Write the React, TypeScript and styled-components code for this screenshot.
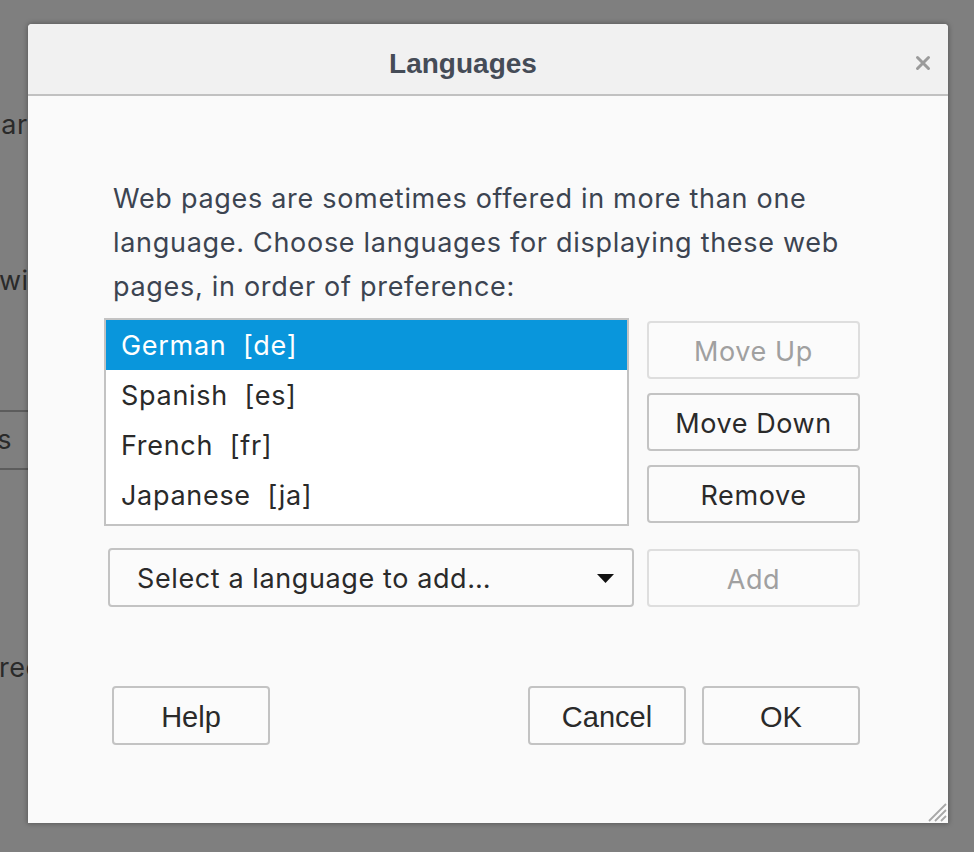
import React from "react";
import styled, { createGlobalStyle } from "styled-components";

const Global = createGlobalStyle`
  html, body { margin: 0; padding: 0; }
  body { width: 974px; height: 852px; overflow: hidden; background: #7f7f7f; }
`;

const Screen = styled.div`
  position: relative;
  width: 974px;
  height: 852px;
  background: #7f7f7f;
  overflow: hidden;
  font-family: Inter, "Noto Sans", sans-serif;
`;

const BackPage = styled.div`
  display: flex;
  flex-direction: column;
  padding-top: 110px;
  color: #2a2a2a;
  font-size: 27px;
  letter-spacing: 0.5px;
`;

const BgLine = styled.div<{ $shift?: number; $end?: number; $top: number }>`
  margin-left: ${(p) => p.$shift ?? 0}px;
  width: ${(p) => (p.$end ? `${p.$end}px` : "auto")};
  margin-top: ${(p) => p.$top}px;
  height: 30px;
  line-height: 30px;
  display: flex;
  justify-content: ${(p) => (p.$end ? "flex-end" : "flex-start")};
  white-space: nowrap;
`;

const BgRule = styled.div<{ $top: number }>`
  margin-top: ${(p) => p.$top}px;
  height: 2px;
  background: #5c5c5c;
  width: 200px;
`;

const Dialog = styled.div`
  position: absolute;
  left: 28px;
  top: 24px;
  width: 920px;
  height: 799px;
  display: flex;
  flex-direction: column;
  background: #fafafa;
  border-radius: 4px 4px 0 0;
  box-shadow: 0 0 5px 1px rgba(0, 0, 0, 0.28);
  overflow: hidden;
`;

const Header = styled.div`
  position: relative;
  height: 70px;
  flex: 0 0 70px;
  display: flex;
  align-items: center;
  justify-content: center;
  padding-right: 50px;
  background: #f1f1f1;
  border-bottom: 2px solid #c1c1c1;
`;

const Title = styled.div`
  font-family: "Liberation Sans", Arial, sans-serif;
  font-weight: bold;
  font-size: 28px;
  color: #454c57;
  margin-top: 9px;
`;

const Close = styled.button`
  position: absolute;
  right: 16px;
  top: 30px;
  width: 18px;
  height: 18px;
  padding: 0;
  border: none;
  background: transparent;
  display: flex;
  align-items: center;
  justify-content: center;
`;

const Body = styled.div`
  flex: 1;
  display: flex;
  flex-direction: column;
  padding: 81px 88px 0 76px;
`;

const Intro = styled.p`
  margin: 0 0 9px 9px;
  font-size: 27px;
  letter-spacing: 0.7px;
  line-height: 44px;
  color: #3c4451;
`;

const ListRow = styled.div`
  display: flex;
  gap: 18px;
  align-items: flex-start;
`;

const List = styled.div`
  width: 525px;
  height: 208px;
  box-sizing: border-box;
  border: 2px solid #c3c3c3;
  background: #ffffff;
  display: flex;
  flex-direction: column;
`;

const Item = styled.div<{ $selected?: boolean }>`
  height: 50px;
  flex: 0 0 50px;
  display: flex;
  align-items: center;
  padding-left: 15px;
  font-size: 27px;
  letter-spacing: 0.7px;
  color: ${(p) => (p.$selected ? "#ffffff" : "#2a2a2a")};
  background: ${(p) => (p.$selected ? "#0996dc" : "transparent")};
  white-space: pre;
`;

const SideButtons = styled.div`
  display: flex;
  flex-direction: column;
  gap: 14px;
  padding-top: 3px;
`;

const Button = styled.button<{ $disabled?: boolean; $w?: number; $classic?: boolean }>`
  width: ${(p) => p.$w ?? 213}px;
  height: ${(p) => (p.$classic ? 59 : 58)}px;
  box-sizing: border-box;
  border: 2px solid ${(p) => (p.$disabled ? "#dedede" : "#c3c3c3")};
  border-radius: 4px;
  background: #fbfbfb;
  color: ${(p) => (p.$disabled ? "#a0a0a0" : "#2a2a2a")};
  font-family: ${(p) =>
    p.$classic ? `"Liberation Sans", Arial, sans-serif` : `Inter, "Noto Sans", sans-serif`};
  font-size: ${(p) => (p.$classic ? 29 : 27)}px;
  letter-spacing: ${(p) => (p.$classic ? 0 : 0.6)}px;
  padding: 3px 0 0;
  display: flex;
  align-items: center;
  justify-content: center;
`;

const AddRow = styled.div`
  display: flex;
  align-items: center;
  gap: 13px;
  margin-top: 22px;
  padding-left: 4px;
`;

const Select = styled.div`
  width: 526px;
  height: 59px;
  box-sizing: border-box;
  border: 2px solid #c3c3c3;
  border-radius: 4px;
  background: #fbfbfb;
  display: flex;
  align-items: center;
  justify-content: space-between;
  padding: 2px 18px 0 27px;
  font-size: 27px;
  letter-spacing: 0.6px;
  color: #2a2a2a;
`;

const Footer = styled.div`
  display: flex;
  align-items: center;
  margin-top: 79px;
  padding-left: 8px;
  gap: 16px;
`;

const Spacer = styled.div`
  flex: 1;
`;

const Grip = styled.div`
  position: absolute;
  right: 1px;
  bottom: 1px;
  width: 20px;
  height: 20px;
`;

export default function App() {
  return (
    <>
      <Global />
      <Screen>
        <BackPage>
          <BgLine $shift={-33} $top={0}>Sharing data</BgLine>
          <BgLine $shift={-1} $top={126}>windows and tabs</BgLine>
          <BgRule $top={114} />
          <BgLine $end={12} $top={13}>Settings</BgLine>
          <BgRule $top={13} />
          <BgLine $shift={-1} $top={183}>recommended</BgLine>
        </BackPage>
        <Dialog>
          <Header>
            <Title>Languages</Title>
            <Close aria-label="Close">
              <svg width="16" height="16" viewBox="0 0 16 16">
                <path d="M2.5 2.5 L13.5 13.5 M13.5 2.5 L2.5 13.5" stroke="#9b9b9b" strokeWidth="3" strokeLinecap="round" />
              </svg>
            </Close>
          </Header>
          <Body>
            <Intro>
              Web pages are sometimes offered in more than one language. Choose languages for displaying these web
              pages, in order of preference:
            </Intro>
            <ListRow>
              <List>
                <Item $selected>{"German  [de]"}</Item>
                <Item>{"Spanish  [es]"}</Item>
                <Item>{"French  [fr]"}</Item>
                <Item>{"Japanese  [ja]"}</Item>
              </List>
              <SideButtons>
                <Button $disabled>Move Up</Button>
                <Button>Move Down</Button>
                <Button>Remove</Button>
              </SideButtons>
            </ListRow>
            <AddRow>
              <Select>
                <span>Select a language to add…</span>
                <svg width="17" height="9" viewBox="0 0 17 9">
                  <path d="M0 0 H17 L8.5 9 Z" fill="#111" />
                </svg>
              </Select>
              <Button $disabled>Add</Button>
            </AddRow>
            <Footer>
              <Button $classic $w={158}>Help</Button>
              <Spacer />
              <Button $classic $w={158}>Cancel</Button>
              <Button $classic $w={158}>OK</Button>
            </Footer>
          </Body>
          <Grip>
            <svg width="20" height="20" viewBox="0 0 20 20">
              <path d="M19 2 L2 19 M19 8 L8 19 M19 14 L14 19" stroke="#a8a8a8" strokeWidth="1.8" />
            </svg>
          </Grip>
        </Dialog>
      </Screen>
    </>
  );
}
